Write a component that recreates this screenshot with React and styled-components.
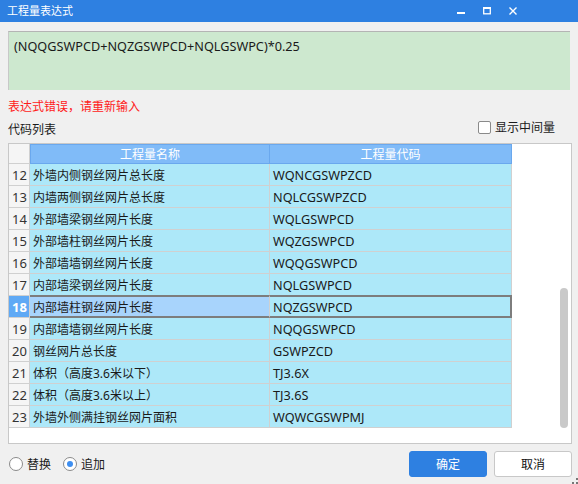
import React from "react";
import styled, { createGlobalStyle } from "styled-components";

const GlobalStyle = createGlobalStyle`
  html, body {
    margin: 0;
    padding: 0;
    background: #f0f0f0;
  }
  * {
    box-sizing: border-box;
  }
`;

const FONT = `"Noto Sans", "Noto Sans CJK SC", sans-serif`;

const rows = [
  [12, "外墙内侧钢丝网片总长度", "WQNCGSWPZCD"],
  [13, "内墙两侧钢丝网片总长度", "NQLCGSWPZCD"],
  [14, "外部墙梁钢丝网片长度", "WQLGSWPCD"],
  [15, "外部墙柱钢丝网片长度", "WQZGSWPCD"],
  [16, "外部墙墙钢丝网片长度", "WQQGSWPCD"],
  [17, "内部墙梁钢丝网片长度", "NQLGSWPCD"],
  [18, "内部墙柱钢丝网片长度", "NQZGSWPCD"],
  [19, "内部墙墙钢丝网片长度", "NQQGSWPCD"],
  [20, "钢丝网片总长度", "GSWPZCD"],
  [21, "体积（高度3.6米以下）", "TJ3.6X"],
  [22, "体积（高度3.6米以上）", "TJ3.6S"],
  [23, "外墙外侧满挂钢丝网片面积", "WQWCGSWPMJ"],
];

const App = () => {
  return (
    <Window>
      <GlobalStyle />
      <TitleBar>
        <Title>工程量表达式</Title>
        <Controls>
          <svg width="8" height="8" viewBox="0 0 8 8">
            <rect x="0" y="5" width="8" height="2" fill="#fff" />
          </svg>
          <svg width="8" height="8" viewBox="0 0 8 8">
            <rect x="0.7" y="0.7" width="6.6" height="6.1" fill="none" stroke="#fff" strokeWidth="1.3" />
            <rect x="0" y="0" width="8" height="2" fill="#fff" />
          </svg>
          <svg width="8" height="8" viewBox="0 0 8 8">
            <path d="M0.5 0.5 L7.5 7.5 M7.5 0.5 L0.5 7.5" stroke="#fff" strokeWidth="1.4" />
          </svg>
        </Controls>
      </TitleBar>

      <Body>
        <ExprBox>(NQQGSWPCD+NQZGSWPCD+NQLGSWPC)*0.25</ExprBox>
        <ErrorText>表达式错误，请重新输入</ErrorText>

        <ListHead>
          <span>代码列表</span>
          <CheckLabel>
            <CheckBox />
            显示中间量
          </CheckLabel>
        </ListHead>

        <GridFrame>
          <Table>
            <HeadRow>
              <NumHead />
              <HeadCell>工程量名称</HeadCell>
              <HeadCell>工程量代码</HeadCell>
            </HeadRow>
            {rows.map(([n, name, code]) => (
              <Row key={n}>
                <NumCell $selected={n === 18}>{n}</NumCell>
                <Cell $selected={n === 18}>{name}</Cell>
                <Cell $code>{code}</Cell>
              </Row>
            ))}
          </Table>
          <ScrollTrack>
            <Thumb />
          </ScrollTrack>
        </GridFrame>

        <Footer>
          <Radios>
            <RadioLabel>
              <Radio />
              替换
            </RadioLabel>
            <RadioLabel>
              <Radio $checked />
              追加
            </RadioLabel>
          </Radios>
          <Buttons>
            <Button $primary>确定</Button>
            <Button>取消</Button>
          </Buttons>
        </Footer>
      </Body>
      <Grip>
        <svg width="6" height="6" viewBox="0 0 6 6">
          <rect x="4" y="0" width="2" height="2" fill="#777" />
          <rect x="0" y="4" width="2" height="2" fill="#777" />
          <rect x="4" y="4" width="2" height="2" fill="#777" />
        </svg>
      </Grip>
    </Window>
  );
};

export default App;

const Window = styled.div`
  position: relative;
  width: 578px;
  height: 484px;
  background: #f0f0f0;
  font-family: ${FONT};
  font-size: 12px;
  color: #1a1a1a;
  display: flex;
  flex-direction: column;
  overflow: hidden;
`;

const TitleBar = styled.div`
  height: 22px;
  background: #2e80e1;
  display: flex;
  align-items: center;
  justify-content: space-between;
  padding: 0 61px 0 7px;
`;

const Title = styled.div`
  color: #fff;
  font-size: 11px;
  line-height: 22px;
`;

const Controls = styled.div`
  display: flex;
  align-items: center;
  gap: 18px;

  svg {
    display: block;
  }
`;

const Body = styled.div`
  padding: 9px 6px 0 8px;
  display: flex;
  flex-direction: column;
`;

const ExprBox = styled.div`
  height: 59px;
  margin-right: 2px;
  background: #cde8cf;
  border-top: 1px solid #b4b4b4;
  border-left: 1px solid #c8c8c8;
  padding: 6px 5px;
  font-size: 12.7px;
  color: #1a1a1a;
  line-height: 16px;
`;

const ErrorText = styled.div`
  color: #ff1a1a;
  margin-top: 9px;
  line-height: 16px;
`;

const ListHead = styled.div`
  display: flex;
  align-items: center;
  justify-content: space-between;
  margin-top: 6px;
  height: 16px;
  padding-right: 17px;
`;

const CheckLabel = styled.label`
  display: flex;
  align-items: center;
  gap: 4px;
  font-size: 12px;
  margin-top: -4px;
`;

const CheckBox = styled.span`
  width: 13px;
  height: 13px;
  border: 1px solid #8a8a8a;
  border-radius: 2px;
  background: #fff;
`;

const GridFrame = styled.div`
  margin-top: 6px;
  width: 564px;
  height: 301px;
  border: 1px solid #c8c8c8;
  background: #fff;
  display: flex;
  justify-content: space-between;
`;

const Table = styled.div`
  display: grid;
  grid-template-columns: 21px 240px 242px;
  grid-auto-rows: 22px;
  grid-template-rows: 20px;
  align-content: start;
`;

const HeadRow = styled.div`
  display: contents;
`;

const NumHead = styled.div`
  background: #f5f5f5;
  border-right: 1px solid #d0d0d0;
  border-bottom: 1px solid #d0d0d0;
`;

const HeadCell = styled.div`
  background: #80bbf8;
  border: 1px solid #6aa8ee;
  border-left: none;
  color: #fff;
  font-size: 12px;
  display: flex;
  align-items: center;
  justify-content: center;

  &:nth-child(2) {
    border-left: 1px solid #6aa8ee;
  }
`;

const Row = styled.div`
  display: contents;
`;

const NumCell = styled.div`
  background: ${(p) => (p.$selected ? "#5fa9f5" : "#f5f5f5")};
  color: ${(p) => (p.$selected ? "#fff" : "#333")};
  font-weight: ${(p) => (p.$selected ? "bold" : "normal")};
  font-size: 13px;
  border-right: 1px solid #d0d0d0;
  border-bottom: 1px solid #d0d0d0;
  display: flex;
  align-items: center;
  justify-content: center;
  padding-left: 1px;
`;

const Cell = styled.div`
  background: ${(p) => (p.$selected ? "#a8d4fc" : "#ade8f9")};
  border-right: 1px solid #d0d0d0;
  border-bottom: 1px solid #d0d0d0;
  display: flex;
  align-items: center;
  padding-left: 3px;
  font-size: ${(p) => (p.$code ? "12.7px" : "12px")};
  white-space: nowrap;

  ${Row}:nth-child(8) > & {
    border-top: 2px solid #7d7d7d;
    border-bottom: 2px solid #7d7d7d;
    margin-top: -1px;
  }
  ${Row}:nth-child(8) > &:last-child {
    border-right: 2px solid #7d7d7d;
  }
`;

const ScrollTrack = styled.div`
  padding: 144px 3px 0 0;
`;

const Thumb = styled.div`
  width: 8px;
  height: 140px;
  border-radius: 4px;
  background: #c9c9c9;
`;

const Footer = styled.div`
  display: flex;
  align-items: center;
  justify-content: space-between;
  margin-top: 6px;
  height: 27px;
`;

const Radios = styled.div`
  display: flex;
  align-items: center;
  gap: 12px;
  padding-left: 1px;
`;

const RadioLabel = styled.label`
  display: flex;
  align-items: center;
  gap: 4px;
  font-size: 12px;
`;

const Radio = styled.span`
  width: 14px;
  height: 14px;
  border-radius: 50%;
  border: 1px solid #8a8a8a;
  background: #fff;
  display: flex;
  align-items: center;
  justify-content: center;

  &::after {
    content: "";
    width: 6px;
    height: 6px;
    border-radius: 50%;
    background: ${(p) => (p.$checked ? "#3d8ef0" : "transparent")};
  }
`;

const Buttons = styled.div`
  display: flex;
  gap: 7px;
`;

const Button = styled.button`
  width: 78px;
  height: 26px;
  border-radius: 3px;
  font-family: ${FONT};
  font-size: 12px;
  border: 1px solid ${(p) => (p.$primary ? "#2e80e1" : "#c8c8c8")};
  background: ${(p) => (p.$primary ? "#2e80e1" : "#fff")};
  color: ${(p) => (p.$primary ? "#fff" : "#111")};
  padding: 0;
`;

const Grip = styled.div`
  position: absolute;
  right: 0;
  bottom: 0;
  width: 6px;
  height: 6px;

  svg {
    display: block;
  }
`;
